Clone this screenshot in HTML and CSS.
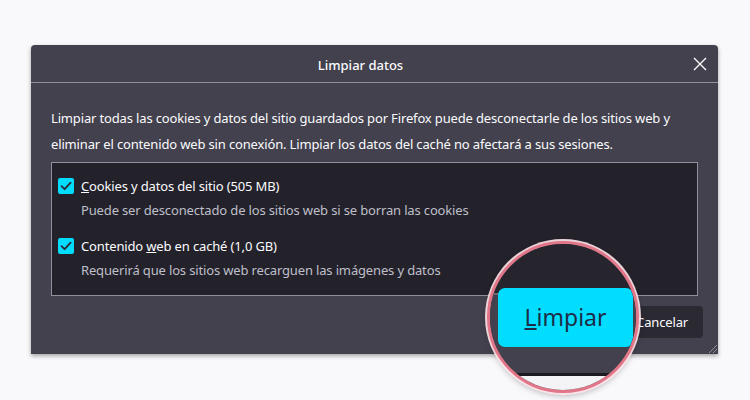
FILE: index.html
```html
<!DOCTYPE html>
<html lang="es">
<head>
<meta charset="utf-8">
<link rel="stylesheet" href="styles.css">
</head>
<body>
<div class="page">
  <div class="dialog">
    <div class="titlebar">
      <span class="title">Limpiar datos</span>
      <svg class="close" width="14" height="14" viewBox="0 0 14 14"><path d="M1 1L13 13M13 1L1 13" stroke="#fbfbfe" stroke-width="1.4" fill="none"/></svg>
    </div>
    <div class="body">
      <p class="intro">Limpiar todas las cookies y datos del sitio guardados por Firefox puede desconectarle de los sitios web y eliminar el contenido web sin conexión. Limpiar los datos del caché no afectará a sus sesiones.</p>
      <div class="options">
        <div class="option">
          <div class="row">
            <span class="check"><svg width="16" height="16" viewBox="0 0 16 16"><path d="M3.5 8.2L6.6 11.2L12.6 4.6" stroke="#2b2a33" stroke-width="1.8" fill="none" stroke-linecap="round" stroke-linejoin="round"/></svg></span>
            <span class="label"><u>C</u>ookies y datos del sitio (505 MB)</span>
          </div>
          <div class="desc">Puede ser desconectado de los sitios web si se borran las cookies</div>
        </div>
        <div class="option">
          <div class="row">
            <span class="check"><svg width="16" height="16" viewBox="0 0 16 16"><path d="M3.5 8.2L6.6 11.2L12.6 4.6" stroke="#2b2a33" stroke-width="1.8" fill="none" stroke-linecap="round" stroke-linejoin="round"/></svg></span>
            <span class="label">Contenido <u>w</u>eb en caché (1,0 GB)</span>
          </div>
          <div class="desc">Requerirá que los sitios web recarguen las imágenes y datos</div>
        </div>
      </div>
      <div class="buttons">
        <button class="btn primary"><u>L</u>impiar</button>
        <button class="btn">Cancelar</button>
      </div>
    </div>
    <div class="grip"></div>
  </div>
</div>
<div class="lens">
  <div class="lens-top"></div>
  <div class="lens-mid"></div>
  <div class="lens-bottom"></div>
  <div class="lens-btn"><span><u>L</u>impiar</span></div>
</div>
</body>
</html>
```
FILE: styles.css
```css
html, body {
  margin: 0;
  padding: 0;
  background: #f9f9fb;
  width: 750px;
  height: 400px;
  overflow: hidden;
  font-family: "Noto Sans", "Open Sans", sans-serif;
}
.page {
  padding: 45px 0 0 31px;
}
.dialog {
  position: relative;
  width: 687px;
  height: 309px;
  background: #42414d;
  border-radius: 4px 4px 0 0;
  box-shadow: 0 2px 4px rgba(0,0,0,0.35);
  color: #fbfbfe;
  box-sizing: border-box;
}
.titlebar {
  height: 37px;
  border-bottom: 1px solid #8f8f9d;
  display: flex;
  align-items: center;
  justify-content: center;
  padding-right: 28px;
  position: relative;
}
.title {
  font-size: 13px;
  font-weight: 500;
  padding-top: 2px;
}
.close {
  position: absolute;
  right: 11px;
  top: 12px;
}
.body {
  padding: 0 20px 0 20px;
}
.intro {
  margin: 22px 0 0 0;
  font-size: 13px;
  line-height: 26px;
  letter-spacing: -0.15px;
}
.options {
  margin-top: 5px;
  height: 134px;
  box-sizing: border-box;
  border: 1px solid #8f8f9d;
  background: #23222b;
  padding: 11px 0 0 6px;
}
.option {
  margin-bottom: 12px;
}
.row {
  display: flex;
  align-items: center;
  height: 24px;
}
.check {
  width: 16px;
  height: 16px;
  background: #00ddff;
  border-radius: 2px;
  display: flex;
  margin-right: 7px;
}
.label {
  font-size: 13px;
  letter-spacing: -0.15px;
}
.desc {
  font-size: 13px;
  letter-spacing: -0.15px;
  color: #bfbfc9;
  padding-left: 23px;
  line-height: 24px;
}
.buttons {
  display: flex;
  justify-content: flex-end;
  gap: 6px;
  margin-top: 10px;
  margin-right: -5px;
}
.btn {
  font-family: "Noto Sans", "Open Sans", sans-serif;
  font-size: 13px;
  height: 32px;
  border: none;
  border-radius: 4px;
  background: #2b2a33;
  color: #fbfbfe;
  padding: 0 15px;
  letter-spacing: -0.15px;
}
.btn.primary {
  background: #00ddff;
  color: #2b2a33;
}
.grip {
  position: absolute;
  right: 1px;
  bottom: 1px;
  width: 10px;
  height: 10px;
  background: repeating-linear-gradient(135deg, transparent 0 2px, #8f8f9d 2px 3px);
  clip-path: polygon(100% 0, 100% 100%, 0 100%);
}
.lens {
  position: absolute;
  left: 487px;
  top: 241px;
  width: 152px;
  height: 152px;
  box-sizing: border-box;
  border-radius: 50%;
  border: 3px solid #e07688;
  box-shadow: 0 0 0 2px rgba(255,230,235,0.9), 0 3px 6px rgba(0,0,0,0.25);
  overflow: hidden;
  display: flex;
  flex-direction: column;
  background: #42414d;
}
.lens-top {
  height: 49px;
  background: #26252d;
  border-bottom: 2px solid #6a6975;
  flex: none;
}
.lens-mid {
  height: 78px;
  background: #42414d;
  border-bottom: 3px solid #1c1b22;
  flex: none;
}
.lens-bottom {
  flex: 1;
  background: #f4f3f5;
}
.lens-btn {
  position: absolute;
  left: 8px;
  top: 44px;
  width: 135px;
  height: 59px;
  background: #00ddff;
  border-radius: 7px;
  display: flex;
  align-items: center;
  justify-content: center;
  font-size: 23px;
  color: #1d2c47;
}
.lens-btn span {
  padding-bottom: 2px;
}
```
